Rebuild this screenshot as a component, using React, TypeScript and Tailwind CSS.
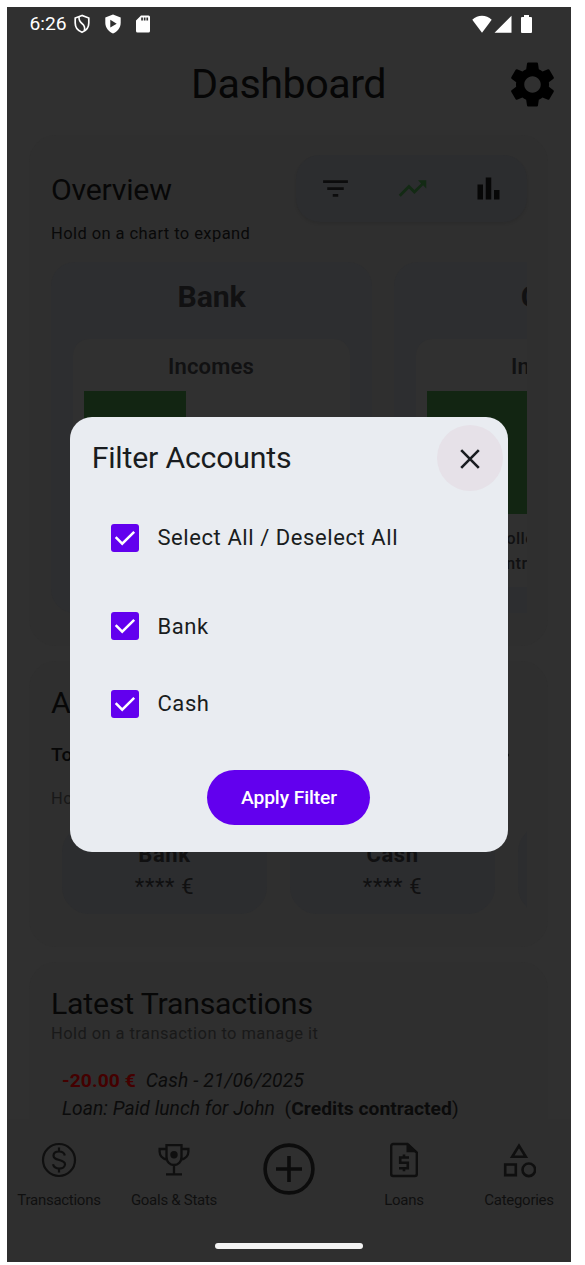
import type { ReactNode } from "react";
import { MdBarChart, MdFilterList, MdSettings, MdTrendingUp, MdVisibility } from "react-icons/md";

function StatusBar() {
  return (
    <div className="flex h-[33px] shrink-0 items-center pl-[22px] text-white">
      <span className="w-[45px] pl-[0.5px] text-[19.25px] leading-[33px]">6:26</span>
      <svg className="h-[20px] w-[16px]" viewBox="0 0 16 20" fill="none" stroke="#fff" strokeWidth="1.7">
        <path d="M8 1.500 1.200 4v5c0 4.300 2.800 7.800 6.800 9.300 4-1.500 6.800-5 6.800-9.300V4L8 1.500Z" />
        <path d="M5 3c-.2 3.600.8 4.800 3 6.500 2.700 2.100 3.300 4 2.300 7.300" strokeWidth="1.600" />
      </svg>
      <svg className="ml-[14.5px] h-[20px] w-[16px]" viewBox="0 0 16 20">
        <path d="M8 .5.300 3.600v5.200c0 4.900 3.200 9 7.700 10.600 4.500-1.600 7.700-5.700 7.700-10.600V3.600L8 .5Z" fill="#fff" />
        <path d="M5.300 5.800v7.800l6.400-3.900-6.400-3.900Z" fill="#303030" />
      </svg>
      <svg className="ml-[15px] h-[18px] w-[14px]" viewBox="0 0 14 18">
        <path d="M5 .5h7.500a1.500 1.500 0 0 1 1.500 1.500v14a1.500 1.500 0 0 1-1.500 1.500h-11A1.500 1.500 0 0 1 0 16V5.500l5-5Z" fill="#fff" />
        <path d="M5.200 2.500h1.700v3H5.200zM7.800 2.500h1.700v3H7.800zM10.400 2.500h1.700v3h-1.700z" fill="#303030" />
      </svg>
      <svg className="ml-[322.5px] h-[18px] w-[20px]" viewBox="0 0 21 18" preserveAspectRatio="none" fill="#fff">
        <path d="M.3 4.800C3.200 2.100 6.700.700 10.500.700s7.300 1.400 10.200 4.100L10.500 17.700.300 4.800Z" />
      </svg>
      <svg className="ml-[1.500px] h-[18px] w-[18px]" viewBox="0 0 18 18" fill="#fff">
        <path d="M17.500.700v17H.500l17-17Z" />
      </svg>
      <svg className="ml-[9px] h-[18px] w-[11px]" viewBox="0 0 11 18" fill="#fff">
        <path d="M3 0h5v2h2a1 1 0 0 1 1 1v14a1 1 0 0 1-1 1H1a1 1 0 0 1-1-1V3a1 1 0 0 1 1-1h2V0Z" />
      </svg>
    </div>
  );
}

function Header() {
  return (
    <header className="flex h-[88px] shrink-0 items-center text-[#060606]">
      <h1 className="ml-[184px] text-[41.25px] leading-[50px] tracking-[-0.5px] whitespace-nowrap">
        Dashboard
      </h1>
      <MdSettings className="mr-[11.5px] ml-auto size-[55px] shrink-0 text-black" />
    </header>
  );
}

function ChartCard({ name, bar, legend }: { name: string; bar: string; legend: ReactNode }) {
  return (
    <div className="h-[351px] w-[321px] shrink-0 rounded-[24px] bg-[#2d2e30] px-[22px] text-center text-[#111112]">
      <h3 className="h-[77px] text-[30.25px] leading-[70px] font-bold tracking-[-0.2px]">{name}</h3>
      <div className="h-[248px] rounded-[16px] bg-[#303030] px-[11px]">
        <p className="h-[52px] pr-px text-[22px] leading-[55px] font-semibold tracking-[0.2px]">Incomes</p>
        <div className={`h-[123px] bg-[#122512] ${bar}`} />
        <div className="pt-[12px] text-left text-[16.5px] leading-[25px] font-medium tracking-[0.4px] whitespace-nowrap">
          {legend}
        </div>
      </div>
    </div>
  );
}

function Overview() {
  return (
    <section className="h-[511px] shrink-0 rounded-[27px] bg-[#2f2f2f] pt-[20px] pr-[21px] pl-[22px]">
      <div className="flex h-[69px] items-start justify-between">
        <h2 className="pt-px text-[30.25px] leading-[68px] tracking-[-0.25px] text-[#070707]">Overview</h2>
        <div className="flex h-[67px] w-[231px] items-center justify-between rounded-[24px] bg-[#2c2d2f] pr-[22px] pl-[23px] shadow-[0_2px_3px_rgba(0,0,0,0.08)]">
          <MdFilterList className="size-[33px] text-[#0c0c0d]" />
          <MdTrendingUp className="size-[33px] text-[#132a14]" />
          <MdBarChart className="size-[33px] text-[#070707]" />
        </div>
      </div>
      <p className="mt-[-1px] h-[39px] text-[16.5px] leading-[21px] tracking-[0.42px] text-[#090909]">
        Hold on a chart to expand
      </p>
      <div className="flex gap-[22px] overflow-hidden">
        <ChartCard name="Bank" bar="w-[102px]" legend={<p>Collected</p>} />
        <ChartCard
          name="Cash"
          bar="w-full"
          legend={
            <>
              <p className="pl-[68px]">Collected</p>
              <p className="pl-[58px]">Contracted</p>
            </>
          }
        />
      </div>
    </section>
  );
}

function AccountTile({ name }: { name: string }) {
  return (
    <div className="h-[89px] w-[205px] shrink-0 rounded-[27px] bg-[#2c2d2f] pt-[14px] text-center text-[22px] leading-[32px] text-[#101011]">
      <p className="font-bold tracking-[0.6px]">{name}</p>
      <p className="tracking-[0.6px]">**** €</p>
    </div>
  );
}

function Accounts() {
  return (
    <section className="mt-[15px] h-[286px] shrink-0 rounded-[27px] bg-[#2f2f2f] pt-[20px] pr-[21px] pl-[22px]">
      <h2 className="text-[30.25px] leading-[44px] text-[#070707]">Accounts</h2>
      <div className="mt-[16px] flex items-center justify-between pr-[17px] text-[19.25px] leading-[28px] font-medium text-[#070707]">
        <span>Total</span>
        <MdVisibility className="size-[24px]" />
      </div>
      <p className="mt-[17.5px] text-[16.5px] leading-[24px] tracking-[0.42px] text-[#181818]">
        Hold on an account to manage it
      </p>
      <div className="mt-[14.5px] flex gap-[23px] overflow-hidden pl-[11px]">
        <AccountTile name="Bank" />
        <AccountTile name="Cash" />
        <AccountTile name="" />
      </div>
    </section>
  );
}

function LatestTransactions() {
  return (
    <section className="mt-[15px] h-[157px] shrink-0 rounded-t-[27px] bg-[#2f2f2f] pt-[21px] pl-[22px]">
      <h2 className="text-[30.25px] leading-[42px] tracking-[-0.2px] text-[#070707]">Latest Transactions</h2>
      <p className="mt-[-1px] text-[16.5px] leading-[20px] tracking-[0.42px] text-[#191919]">
        Hold on a transaction to manage it
      </p>
      <div className="pt-[23px] pl-[11px] text-[19.25px] leading-[28px] whitespace-pre text-[#0b0b0b]">
        <p>
          <b className="font-bold tracking-[0.1px] text-[#440000]">-20.00 €</b>
          <i className="tracking-[0.12px]">{"  Cash - 21/06/2025"}</i>
        </p>
        <p className="tracking-[0.045px]">
          <i>{"Loan: Paid lunch for John  "}</i>(<b className="font-bold">Credits contracted</b>)
        </p>
      </div>
    </section>
  );
}

function NavItem({ label, children }: { label: string; children: ReactNode }) {
  return (
    <div className="flex w-[115px] shrink-0 flex-col items-center text-[#0f0f0f]">
      <div className="flex h-[41px] items-center">{children}</div>
      <span className="mt-[9.5px] text-[15px] leading-[20px] tracking-[-0.27px] whitespace-nowrap">{label}</span>
    </div>
  );
}

function BottomNav() {
  return (
    <nav className="flex h-[143px] shrink-0 flex-col items-center bg-[#2f2f2f]">
      <div className="flex w-[575px] pt-[20.5px]">
        <NavItem label="Transactions">
          <svg className="size-[36px]" viewBox="0 0 36 36" fill="none" stroke="currentColor" strokeWidth="2.200">
            <circle cx="18" cy="18" r="16" />
            <path d="M18 5.500v4M18 26.500v4M23.800 13.500c-.5-2.500-2.800-4-5.800-4-3.300 0-5.500 1.700-5.500 4.200 0 5.800 11.500 2.800 11.500 8.600 0 2.500-2.300 4.300-5.700 4.300-3.300 0-5.600-1.600-6.300-4.300" />
          </svg>
        </NavItem>
        <NavItem label="Goals & Stats">
          <svg className="size-[34px]" viewBox="0 0 34 34" fill="none" stroke="currentColor" strokeWidth="2.300">
            <path d="M9.500 2.200h15v11.500c0 5-3.200 8.300-7.500 8.300s-7.500-3.300-7.500-8.300V2.200ZM9.500 6H2.600v2.500c0 4 2.800 7.300 7.300 8M24.500 6h6.900v2.500c0 4-2.800 7.300-7.300 8M17 22v9M9 31.300h16" />
            <circle cx="17" cy="11.700" r="3.700" fill="currentColor" stroke="none" />
          </svg>
        </NavItem>
        <div className="flex w-[115px] justify-center pt-[3px] text-[#0c0c0c]">
          <svg className="size-[52px]" viewBox="0 0 52 52" fill="none" stroke="currentColor" strokeWidth="3.600">
            <circle cx="26" cy="26" r="23.900" />
            <path d="M26 13v26M13 26h26" />
          </svg>
        </div>
        <NavItem label="Loans">
          <svg className="h-[36px] w-[28px]" viewBox="0 0 28 36" fill="none" stroke="currentColor" strokeWidth="2.400">
            <path d="M17.500 2H3.200a2 2 0 0 0-2 2v28a2 2 0 0 0 2 2h21.600a2 2 0 0 0 2-2V10.500L17.500 2Z" />
            <path d="M16.500 2v8.200H27L18.500 2h-2Z" fill="currentColor" stroke="none" />
            <path d="M19 15.500h-8.800v5.200h7.600v5.500H9M14 12.500v3M14 26v3.200" strokeWidth="2.600" />
          </svg>
        </NavItem>
        <NavItem label="Categories">
          <svg className="mt-[1px] h-[35px] w-[34px]" viewBox="0 0 34 35" fill="none" stroke="currentColor" strokeWidth="2.600">
            <path d="M17 2.700 10.200 13.700h13.600L17 2.700ZM3.200 21.500h10.600v10.600H3.200z" />
            <circle cx="26.800" cy="26.800" r="6.300" />
          </svg>
        </NavItem>
      </div>
      <div className="mt-auto mb-[13.500px] h-[6px] w-[148px] rounded-full bg-[#f3f3f3]" />
    </nav>
  );
}

function CheckRow({ label }: { label: string }) {
  return (
    <label className="flex items-center gap-[18.5px] text-[22px] leading-[28px] tracking-[0.57px] text-[#191c20]">
      <span className="flex size-[28px] items-center justify-center rounded-[3px] bg-[#6200ee]">
        <svg className="size-[28px]" viewBox="0 0 28 28" fill="none" stroke="#fff" strokeWidth="2.500">
          <path d="m4.700 13.200 6.500 6.500L23.200 7.800" />
        </svg>
      </span>
      <span className="pt-px">{label}</span>
    </label>
  );
}

function FilterDialog() {
  return (
    <div
      role="dialog"
      className="absolute top-[409.5px] left-[62.700px] flex h-[435.500px] w-[438.500px] flex-col rounded-[22px] bg-[#e9ecf1]"
    >
      <div className="flex items-center justify-between pt-[8.500px] pr-[5px] pl-[22px]">
        <h2 className="text-[30.25px] leading-[40px] tracking-[-0.2px] text-[#191c20]">Filter Accounts</h2>
        <button className="flex size-[66px] items-center justify-center rounded-full bg-[#e6e1e8] pt-px">
          <svg className="size-[20px]" viewBox="0 0 20 20" fill="none" stroke="#191c20" strokeWidth="2.600">
            <path d="m1.200 1.200 17.600 17.600M18.800 1.200 1.200 18.800" />
          </svg>
        </button>
      </div>
      <div className="flex flex-col pt-[32px] pl-[41.300px]">
        <CheckRow label="Select All / Deselect All" />
        <div className="mt-[59.500px] flex flex-col gap-[48.500px]">
          <CheckRow label="Bank" />
          <CheckRow label="Cash" />
        </div>
      </div>
      <button className="mt-auto mb-[27px] ml-[137.800px] h-[55px] w-[163px] rounded-full bg-[#6200ee] pt-px text-[19.25px] font-medium tracking-[-0.1px] text-white">
        Apply Filter
      </button>
    </div>
  );
}

export default function App() {
  return (
    <div className="h-[1265px] w-[585px] overflow-hidden bg-white pt-[7px] pl-[7px] font-[Roboto,sans-serif]">
      <div className="relative flex h-[1255px] w-[564px] flex-col overflow-hidden bg-[#303030]">
        <StatusBar />
        <Header />
        <main className="mt-[7px] flex h-[984px] shrink-0 flex-col overflow-hidden pr-[23px] pl-[22px]">
          <Overview />
          <Accounts />
          <LatestTransactions />
        </main>
        <BottomNav />
        <FilterDialog />
      </div>
    </div>
  );
}
